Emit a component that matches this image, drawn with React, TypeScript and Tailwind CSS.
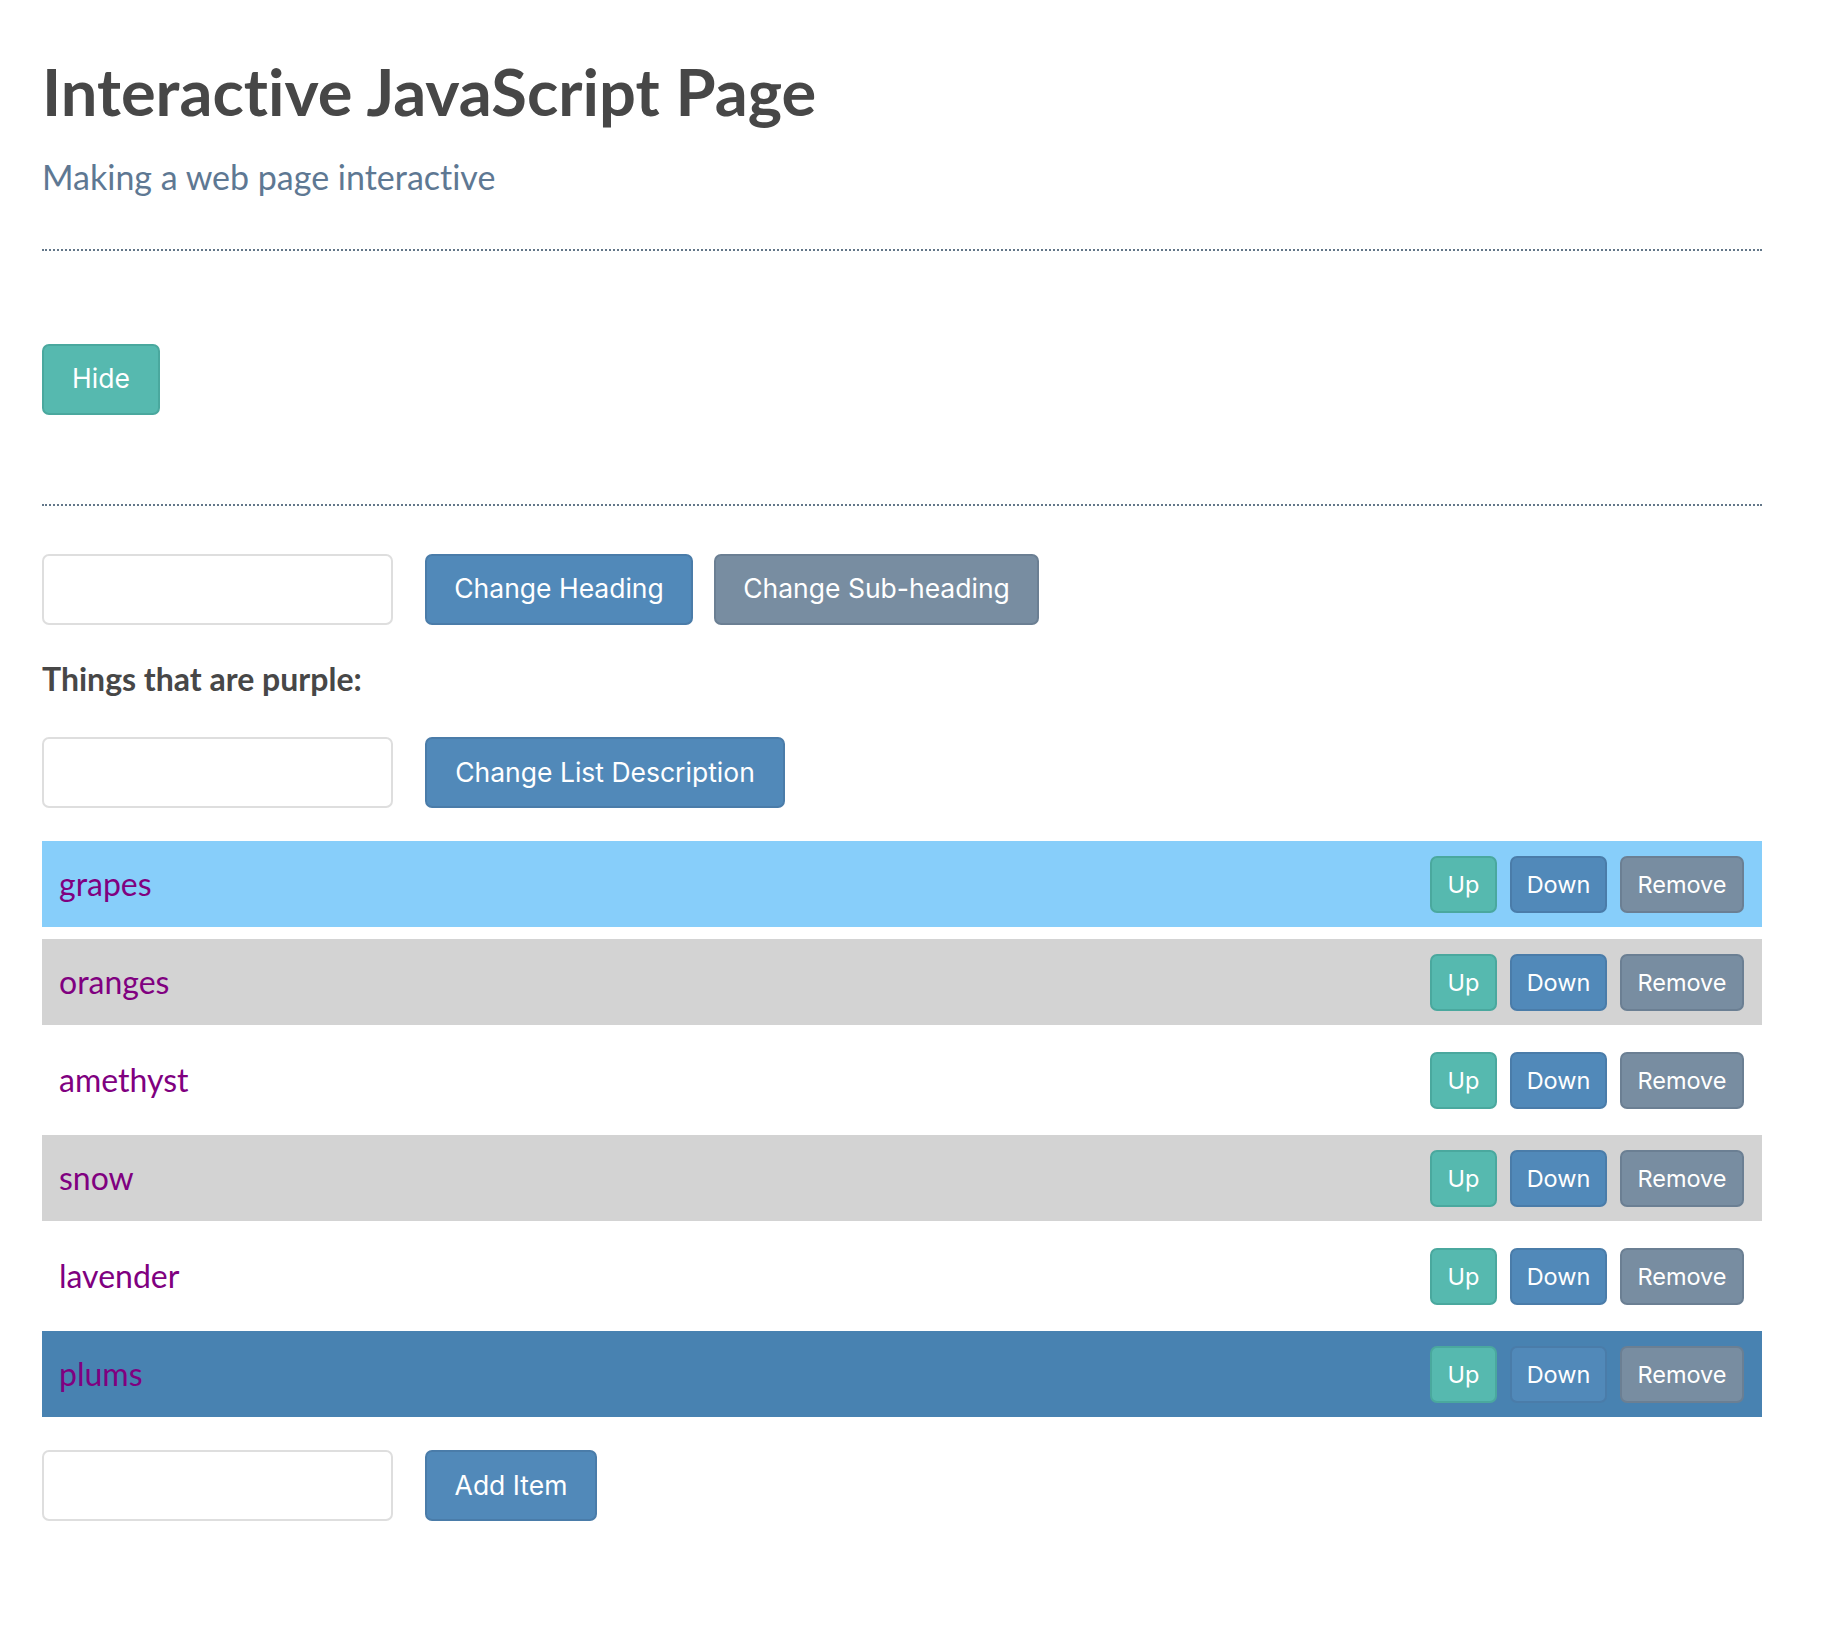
import React from "react";

const lato = { fontFamily: "Lato, 'Noto Sans', sans-serif", fontVariantLigatures: "none" as const };

function Btn({
  label,
  color,
  className,
}: {
  label: string;
  color: "teal" | "blue" | "gray";
  className: string;
}) {
  const c =
    color === "teal"
      ? "bg-[#56b9af] border-[#4aa89e]"
      : color === "blue"
      ? "bg-[#5189b9] border-[#4a7ca9]"
      : "bg-[#788da1] border-[#6b7f93]";
  return (
    <button
      className={`${c} ${className} flex shrink-0 items-center justify-center rounded-[7px] border-2 text-white [font-family:Inter,'Liberation_Sans',sans-serif]`}
    >
      {label}
    </button>
  );
}

const items = [
  { name: "grapes", bg: "bg-[#87cefa]" },
  { name: "oranges", bg: "bg-[#d3d3d3]" },
  { name: "amethyst", bg: "bg-white" },
  { name: "snow", bg: "bg-[#d3d3d3]" },
  { name: "lavender", bg: "bg-white" },
  { name: "plums", bg: "bg-[#4882b1]" },
];

export default function App() {
  return (
    <div className="min-h-[1628px] w-full bg-white" style={lato}>
      <div className="ml-[42px] w-[1720px]">
        <h1 className="pt-[52px] text-[65px] font-bold leading-[1.2] text-[#474747] [font-family:Lato,sans-serif]">
          Interactive JavaScript Page
        </h1>
        <p className="mt-[27px] text-[34px] leading-[1.2] text-[#5e7893] [font-family:Lato,sans-serif]">
          Making a web page interactive
        </p>
        <div className="mt-[51px] border-t-2 border-dotted border-[#637789]" />
        <div className="pt-[93px] pb-[89px]">
          <Btn label="Hide" color="teal" className="h-[71px] w-[118px] text-[26.5px]" />
        </div>
        <div className="border-t-2 border-dotted border-[#637789]" />

        <div className="mt-[48px] flex items-center">
          <input className="h-[71px] w-[351px] rounded-[7px] border-2 border-[#dedede] bg-white" />
          <Btn label="Change Heading" color="blue" className="ml-[32px] h-[71px] w-[268px] text-[26.5px]" />
          <Btn label="Change Sub-heading" color="gray" className="ml-[21px] h-[71px] w-[325px] text-[26.5px]" />
        </div>

        <p className="mt-[35px] text-[32px] font-bold leading-[1.2] text-[#474747] [font-family:Lato,sans-serif]">
          Things that are purple:
        </p>

        <div className="mt-[39px] flex items-center">
          <input className="h-[71px] w-[351px] rounded-[7px] border-2 border-[#dedede] bg-white" />
          <Btn label="Change List Description" color="blue" className="ml-[32px] h-[71px] w-[360px] text-[26.5px]" />
        </div>

        <ul className="mt-[33px] flex flex-col gap-[12px]">
          {items.map((it) => (
            <li
              key={it.name}
              className={`${it.bg} flex h-[86px] items-center justify-between pl-[17px] pr-[18px]`}
            >
              <span className="text-[32px] text-[#800080] [font-family:Lato,sans-serif]">{it.name}</span>
              <div className="flex items-center gap-[13px]">
                <Btn label="Up" color="teal" className="h-[57px] w-[67px] text-[23.5px]" />
                <Btn label="Down" color="blue" className="h-[57px] w-[97px] text-[23.5px]" />
                <Btn label="Remove" color="gray" className="h-[57px] w-[124px] text-[23.5px]" />
              </div>
            </li>
          ))}
        </ul>

        <div className="mt-[33px] flex items-center">
          <input className="h-[71px] w-[351px] rounded-[7px] border-2 border-[#dedede] bg-white" />
          <Btn label="Add Item" color="blue" className="ml-[32px] h-[71px] w-[172px] text-[26.5px]" />
        </div>
      </div>
    </div>
  );
}
